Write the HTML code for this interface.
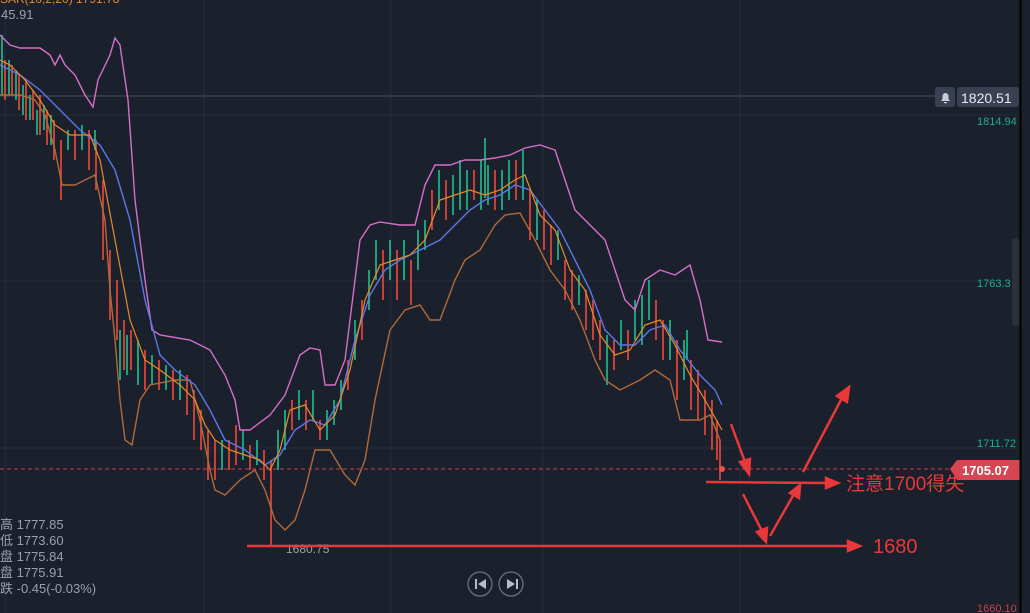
<!DOCTYPE html>
<html><head><meta charset="utf-8"><style>
html,body{margin:0;padding:0;background:#1b202d;overflow:hidden}
svg{display:block}
text{font-family:"Liberation Sans","Noto Sans CJK SC",sans-serif}
</style></head><body>
<svg width="1030" height="613" viewBox="0 0 1030 613" xmlns="http://www.w3.org/2000/svg">
<rect width="1030" height="613" fill="#1b202d"/>
<g stroke="#262d3b" stroke-width="1">
<line x1="5" y1="0" x2="5" y2="613"/><line x1="204" y1="0" x2="204" y2="613"/><line x1="391" y1="0" x2="391" y2="613"/><line x1="543" y1="0" x2="543" y2="613"/><line x1="740" y1="0" x2="740" y2="613"/>
<line x1="0" y1="115" x2="1020" y2="115"/><line x1="0" y1="281" x2="1020" y2="281"/><line x1="0" y1="448" x2="1020" y2="448"/>
</g>
<line x1="0" y1="96" x2="936" y2="96" stroke="#4a505c" stroke-width="1"/>
<path fill="none" stroke="#f04a3a" stroke-width="1.6" d="M5 60v40M12 65v30M19 75v35M26 80v40M33 90v30M40 95v40M47 110v35M54 120v40M61 140v60M75 130v30M89 130v40M96 140v50M103 180v80M110 250v70M117 280v60M124 320v50M131 330v40M145 350v40M159 360v30M173 370v30M187 375v40M194 390v50M201 410v40M208 430v50M215 440v40M229 440v30M236 425v40M250 445v25M264 450v30M271 460v86M292 400v30M306 400v30M320 420v20M348 360v30M362 300v40M383 250v50M397 250v50M411 260v45M432 190v40M446 180v40M474 170v30M495 170v40M516 160v40M530 190v50M544 210v40M551 225v40M565 260v40M572 270v40M586 290v40M593 300v40M600 320v40M614 340v30M628 330v30M656 300v40M663 320v40M677 340v60M691 360v50M698 370v50M705 390v45M712 400v50M717 420v40M720 440v40"/>
<path fill="none" stroke="#1fc08f" stroke-width="1.6" d="M2 35v60M9 60v35M16 70v30M23 85v30M30 95v25M37 110v25M44 105v25M51 115v30M68 130v20M82 125v25M95 130v20M120 330v50M127 335v40M138 340v45M152 355v30M166 365v25M180 370v30M222 440v30M243 430v30M257 440v25M278 430v40M285 410v40M299 390v30M313 390v30M327 410v30M334 400v25M341 380v30M355 320v40M369 270v40M376 240v40M390 240v40M404 240v40M418 230v40M425 220v30M439 170v40M453 175v40M460 160v50M467 170v40M481 160v50M485 138v60M488 165v40M502 170v40M509 160v40M523 150v50M537 200v40M558 230v30M579 275v30M607 335v50M621 320v30M635 300v40M642 295v50M649 280v40M670 320v40M684 340v40M687 330v30"/>
<polyline fill="none" stroke="#d46fc8" stroke-width="1.4" points="0,35 10,45 20,48 40,48 50,55 55,65 60,55 65,65 75,75 85,95 93,107 98,80 110,55 115,38 120,45 128,100 135,200 145,280 152,330 160,335 190,340 210,350 225,375 235,400 240,430 250,430 270,415 285,395 300,355 310,348 320,350 325,385 335,385 345,360 360,240 370,225 380,222 400,225 415,225 425,185 435,165 450,165 465,160 480,160 495,158 510,155 525,148 540,145 555,150 565,180 575,210 590,225 605,240 615,270 625,300 635,310 645,280 660,270 675,275 690,265 700,300 708,340 722,342"/>
<polyline fill="none" stroke="#b06a3a" stroke-width="1.4" points="0,95 20,95 35,100 45,115 55,150 62,185 75,185 95,175 105,220 110,290 115,340 120,400 125,440 132,445 140,400 150,385 175,380 190,380 200,420 210,470 215,490 225,495 240,480 255,470 265,490 275,520 285,530 295,520 305,490 315,450 330,450 345,475 355,485 365,460 375,400 390,330 405,310 420,305 430,320 440,320 455,280 465,260 480,250 495,225 505,215 520,213 535,240 550,270 565,290 580,320 595,360 605,380 620,390 640,380 655,370 670,380 680,420 700,420 710,415 720,440"/>
<polyline fill="none" stroke="#5b78e6" stroke-width="1.4" points="0,65 20,75 40,90 60,110 80,130 100,145 115,170 130,220 145,300 160,355 175,370 195,385 210,410 225,440 245,450 265,465 280,455 295,430 310,420 325,425 340,400 355,340 370,295 385,270 400,260 420,250 440,240 455,225 470,210 485,200 500,195 515,185 530,190 545,210 560,230 575,260 590,290 605,330 620,345 635,345 650,330 665,325 680,350 700,375 715,390 722,405"/>
<polyline fill="none" stroke="#e88a2a" stroke-width="1.2" points="0,60 10,65 25,80 40,100 55,125 70,135 90,135 100,160 115,240 130,320 145,360 160,370 180,385 195,400 205,425 215,440 230,450 245,455 260,460 270,470 280,450 290,410 305,405 320,430 335,415 350,370 365,300 380,265 395,260 410,255 425,240 440,200 455,195 470,190 485,195 500,190 515,180 525,175 540,215 555,230 570,270 585,290 600,335 615,355 630,350 645,325 660,320 675,345 690,375 705,400 722,430"/>
<line x1="0" y1="469" x2="950" y2="469" stroke="#c8404a" stroke-width="1" stroke-dasharray="4,3"/>
<circle cx="722" cy="469" r="3" fill="#f0504a"/>
<text x="0" y="3" fill="#e88a2a" font-size="12">SAR(10,2,20) 1791.78</text>
<text x="1" y="19" fill="#9aa0ab" font-size="13">45.91</text>
<g fill="#9aa0ab" font-size="13">
<text x="0" y="529">高 1777.85</text><text x="0" y="545">低 1773.60</text><text x="0" y="561">盘 1775.84</text><text x="0" y="577">盘 1775.91</text><text x="0" y="593">跌 -0.45(-0.03%)</text>
</g>
<text x="286" y="553" fill="#9aa0ab" font-size="12">1680.75</text>
<g font-size="11"><text x="977" y="125" fill="#1fae8c">1814.94</text><text x="977" y="287" fill="#1fae8c">1763.3</text><text x="977" y="447" fill="#1fae8c">1711.72</text><text x="977" y="612" fill="#c8404a">1660.10</text></g>
<rect x="935" y="87" width="20" height="20" rx="3" fill="#394052"/>
<path d="M941 101 h9 l-1.5-2 v-3 a3 3 0 0 0-6 0 v3z M944 102 h3 a1.5 1.5 0 0 1-3 0z" fill="#c8ccd4"/>
<rect x="957" y="87" width="62" height="20" rx="3" fill="#394052"/>
<text x="961" y="103" fill="#e8eaee" font-size="14">1820.51</text>
<path d="M950 469 L957 460 H1020 V480 H957 Z" fill="#d54552"/>
<text x="962" y="475" fill="#fff" font-size="13" font-weight="bold">1705.07</text>
<line x1="1020.5" y1="0" x2="1020.5" y2="613" stroke="#000" stroke-width="2"/>
<rect x="1012" y="238" width="7" height="88" rx="3" fill="#2a303d"/>
<g fill="none" stroke="#6a707c" stroke-width="1.3"><circle cx="480" cy="584" r="12"/><circle cx="511" cy="584" r="12"/></g>
<g fill="#b8bcc4"><rect x="475" y="579" width="2" height="10"/><path d="M486 579 v10 l-8-5z"/><rect x="516" y="579" width="2" height="10"/><path d="M507 579 v10 l8-5z"/></g>
<g stroke="#e8383a" stroke-width="2.5" fill="#e8383a">
<line x1="731" y1="424" x2="745" y2="462"/><path d="M740 462 l9 12 l1-15z"/>
<line x1="803" y1="472" x2="842" y2="398"/><path d="M837 396 l12-9 l-2 15z"/>
<line x1="706" y1="482" x2="828" y2="483"/><path d="M826 478 l12 5 l-12 5z"/>
<line x1="743" y1="494" x2="762" y2="531"/><path d="M757 532 l9 10 l1-14z"/>
<line x1="770" y1="536" x2="794" y2="494"/><path d="M790 493 l10-8 l-1 13z"/>
<line x1="247" y1="546" x2="850" y2="546"/><path d="M848 541 l12 5 l-12 5z"/>
</g>
<text x="846" y="490" fill="#e8383a" font-size="19">注意1700得失</text>
<text x="873" y="553" fill="#e8383a" font-size="20">1680</text>
</svg>
</body></html>
